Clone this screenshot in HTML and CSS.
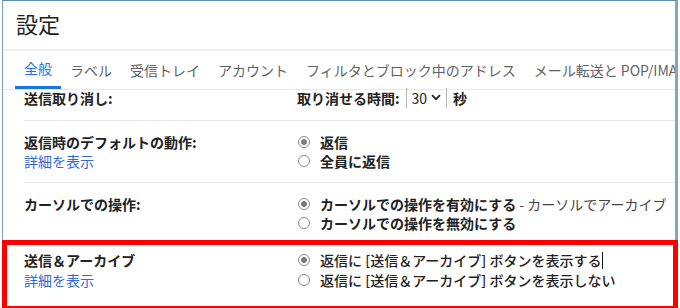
FILE: index.html
```html
<!DOCTYPE html>
<html lang="ja">
  <head>
    <meta charset="UTF-8" />
    <meta name="viewport" content="width=device-width, initial-scale=1.0" />
    <title>設定</title>
    <link rel="stylesheet" href="styles.css">
  </head>
  <body>
    <div class="window">
      <header class="title-bar">
        <h1>設定</h1>
      </header>

      <nav class="tabs">
        <a class="tab active">全般</a>
        <a class="tab">ラベル</a>
        <a class="tab">受信トレイ</a>
        <a class="tab">アカウント</a>
        <a class="tab">フィルタとブロック中のアドレス</a>
        <a class="tab">メール転送と POP/IMAP</a>
      </nav>

      <div class="settings">
        <div class="row first">
          <div class="label"><span class="strong">送信取り消し:</span></div>
          <div class="value">
            <div class="line">
              <span class="strong">取り消せる時間:</span>
              <span class="select">30
                <svg width="10" height="7" viewBox="0 0 10 7"><polyline points="1,1.2 5,5.2 9,1.2" fill="none" stroke="#222" stroke-width="1.8"/></svg>
              </span>
              <span class="strong">秒</span>
            </div>
          </div>
        </div>

        <div class="row">
          <div class="label">
            <div class="line strong">返信時のデフォルトの動作:</div>
            <div class="line"><a class="link">詳細を表示</a></div>
          </div>
          <div class="value">
            <div class="line"><span class="radio checked"></span><span class="strong">返信</span></div>
            <div class="line"><span class="radio"></span><span class="strong">全員に返信</span></div>
          </div>
        </div>

        <div class="row">
          <div class="label">
            <div class="line strong">カーソルでの操作:</div>
          </div>
          <div class="value">
            <div class="line"><span class="radio checked"></span><span class="strong">カーソルでの操作を有効にする</span><span class="note">&nbsp;- カーソルでアーカイブ</span></div>
            <div class="line"><span class="radio"></span><span class="strong">カーソルでの操作を無効にする</span></div>
          </div>
        </div>

        <div class="row highlight">
          <div class="label">
            <div class="line strong">送信＆アーカイブ</div>
            <div class="line"><a class="link">詳細を表示</a></div>
          </div>
          <div class="value medium">
            <div class="line"><span class="radio checked"></span>返信に [送信＆アーカイブ] ボタンを表示する<span class="caret"></span></div>
            <div class="line"><span class="radio"></span>返信に [送信＆アーカイブ] ボタンを表示しない</div>
          </div>
        </div>
      </div>
    </div>
  </body>
</html>
```

FILE: styles.css
```css
html, body {
  margin: 0;
  padding: 0;
}
body {
  width: 680px;
  height: 308px;
  overflow: hidden;
  background: #fff;
  font-family: "Noto Sans CJK JP", "Noto Sans", sans-serif;
  font-size: 14px;
  color: #222;
}
.window {
  width: 672px;
  margin-left: 2px;
  border-top: 1px solid #5a8fad;
  border-left: 1px solid #7aa0b3;
  border-right: 3px solid #86a8b5;
}
.title-bar {
  height: 48px;
  border-bottom: 2px solid #f0f0f0;
}
.title-bar h1 {
  margin: 0;
  padding: 7px 0 0 13px;
  font-size: 22px;
  font-weight: normal;
  line-height: 30px;
  color: #222;
}
.tabs {
  display: flex;
  height: 38px;
  padding-left: 12px;
  border-bottom: 1px solid #e8e8e8;
  white-space: nowrap;
  overflow: hidden;
}
.tab {
  padding: 0 9px;
  line-height: 38px;
  color: #5f6368;
  flex-shrink: 0;
  box-sizing: border-box;
}
.tab.active {
  color: #1a73e8;
  border-bottom: 3px solid #1a73e8;
  line-height: 35px;
}
.settings {
  display: flex;
  flex-direction: column;
}
.row {
  display: grid;
  grid-template-columns: 273px 1fr;
  margin-left: 21px;
  padding: 11px 0 12px;
  border-top: 1px solid #e8e8e8;
}
.row.first {
  border-top: none;
  margin-top: -2px;
  padding-top: 0;
  padding-bottom: 12px;
}
.line {
  display: flex;
  align-items: center;
  height: 19px;
  white-space: nowrap;
}
.value {
  overflow: hidden;
}
.value.medium {
  font-weight: 500;
}
.strong {
  font-weight: bold;
}
.note {
  color: #444;
}
.link {
  color: #3367d6;
}
.select {
  display: inline-flex;
  align-items: center;
  gap: 4px;
  height: 22px;
  margin: 0 6px;
  padding: 0 5px;
  border: 1px solid #b5b5b5;
  border-radius: 2px;
  box-sizing: border-box;
  font-weight: normal;
}
.radio {
  display: inline-block;
  width: 12px;
  height: 12px;
  margin: 0 10px 0 1px;
  border: 1px solid #8a8a8a;
  border-radius: 50%;
  box-sizing: border-box;
  flex-shrink: 0;
}
.radio.checked {
  background: radial-gradient(circle, #7b7b7b 0 2.6px, #fff 3.2px);
}
.caret {
  display: inline-block;
  width: 1px;
  height: 17px;
  margin-left: 1px;
  background: #111;
}
.row.highlight {
  margin: -4px -3px 0 -1px;
  padding: 5px 0 0 17px;
  height: 56px;
  border: 5px solid #ff0000;
}
.row.highlight .line {
  height: 20px;
}
```
